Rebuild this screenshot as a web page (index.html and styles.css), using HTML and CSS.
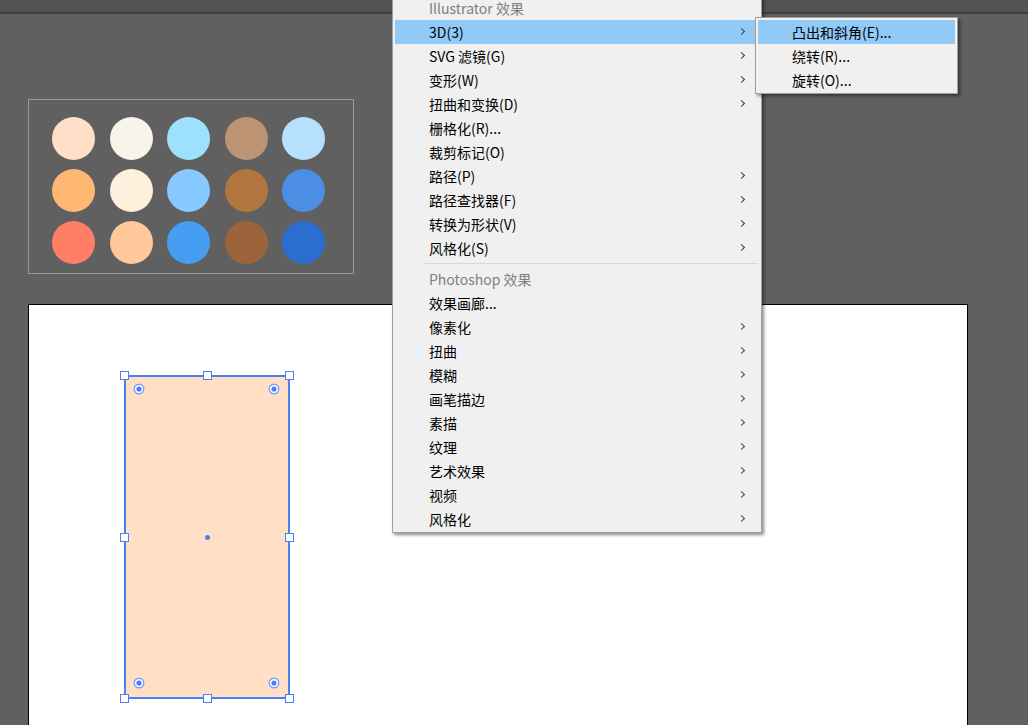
FILE: index.html
```html
<!DOCTYPE html>
<html lang="zh-CN">
<head>
    <meta charset="UTF-8">
    <title>Illustrator 效果菜单</title>
    <link rel="stylesheet" href="styles.css">
</head>
<body>
    <div class="topbar"></div>
    <div class="workspace">
        <div class="swatches">
            <span class="dot" style="background:#ffdfc7"></span>
            <span class="dot" style="background:#f8f4e9"></span>
            <span class="dot" style="background:#9ee1ff"></span>
            <span class="dot" style="background:#bc9373"></span>
            <span class="dot" style="background:#b7e0ff"></span>
            <span class="dot" style="background:#ffb874"></span>
            <span class="dot" style="background:#ffefdd"></span>
            <span class="dot" style="background:#86c8ff"></span>
            <span class="dot" style="background:#b3763f"></span>
            <span class="dot" style="background:#4c8ee3"></span>
            <span class="dot" style="background:#ff7e66"></span>
            <span class="dot" style="background:#ffc99c"></span>
            <span class="dot" style="background:#469df2"></span>
            <span class="dot" style="background:#9d643b"></span>
            <span class="dot" style="background:#2c6ecf"></span>
        </div>

        <div class="artboard">
            <div class="shape">
                <span class="handle h-tl"></span>
                <span class="handle h-tc"></span>
                <span class="handle h-tr"></span>
                <span class="handle h-ml"></span>
                <span class="handle h-mr"></span>
                <span class="handle h-bl"></span>
                <span class="handle h-bc"></span>
                <span class="handle h-br"></span>
                <span class="center-dot"></span>
                <svg class="corner c-tl" width="12" height="12" viewBox="0 0 12 12"><circle cx="6" cy="6" r="4.8" fill="#fff" stroke="#7e9dfb" stroke-width="1.4"/><circle cx="6" cy="6" r="2.6" fill="#4d7ef7"/></svg>
                <svg class="corner c-tr" width="12" height="12" viewBox="0 0 12 12"><circle cx="6" cy="6" r="4.8" fill="#fff" stroke="#7e9dfb" stroke-width="1.4"/><circle cx="6" cy="6" r="2.6" fill="#4d7ef7"/></svg>
                <svg class="corner c-bl" width="12" height="12" viewBox="0 0 12 12"><circle cx="6" cy="6" r="4.8" fill="#fff" stroke="#7e9dfb" stroke-width="1.4"/><circle cx="6" cy="6" r="2.6" fill="#4d7ef7"/></svg>
                <svg class="corner c-br" width="12" height="12" viewBox="0 0 12 12"><circle cx="6" cy="6" r="4.8" fill="#fff" stroke="#7e9dfb" stroke-width="1.4"/><circle cx="6" cy="6" r="2.6" fill="#4d7ef7"/></svg>
            </div>
        </div>
    </div>

    <div class="menu main-menu">
        <div class="menu-item label">Illustrator 效果</div>
        <div class="menu-item sub active">3D(3)</div>
        <div class="menu-item sub">SVG 滤镜(G)</div>
        <div class="menu-item sub">变形(W)</div>
        <div class="menu-item sub">扭曲和变换(D)</div>
        <div class="menu-item">栅格化(R)...</div>
        <div class="menu-item">裁剪标记(O)</div>
        <div class="menu-item sub">路径(P)</div>
        <div class="menu-item sub">路径查找器(F)</div>
        <div class="menu-item sub">转换为形状(V)</div>
        <div class="menu-item sub">风格化(S)</div>
        <div class="separator"></div>
        <div class="menu-item label">Photoshop 效果</div>
        <div class="menu-item">效果画廊...</div>
        <div class="menu-item sub">像素化</div>
        <div class="menu-item sub">扭曲</div>
        <div class="menu-item sub">模糊</div>
        <div class="menu-item sub">画笔描边</div>
        <div class="menu-item sub">素描</div>
        <div class="menu-item sub">纹理</div>
        <div class="menu-item sub">艺术效果</div>
        <div class="menu-item sub">视频</div>
        <div class="menu-item sub">风格化</div>
    </div>

    <div class="menu sub-menu">
        <div class="menu-item active">凸出和斜角(E)...</div>
        <div class="menu-item">绕转(R)...</div>
        <div class="menu-item">旋转(O)...</div>
    </div>
</body>
</html>
```

FILE: styles.css
```css
body {
    margin: 0;
    height: 725px;
    overflow: hidden;
    background-color: #606060;
    font-family: "Noto Sans CJK SC", "Microsoft YaHei", sans-serif;
    font-size: 14px;
    position: relative;
}
.topbar {
    height: 12px;
    background-color: #535353;
    border-bottom: 2px solid #3f3f3f;
}
.workspace {
    padding-left: 28px;
}
.swatches {
    margin-top: 85px;
    width: 301px;
    height: 156px;
    padding: 17px 0 0 23px;
    border: 1px solid #999999;
    display: grid;
    grid-template-columns: repeat(5, 43px);
    grid-auto-rows: 43px;
    column-gap: 14.6px;
    row-gap: 9px;
}
.dot {
    width: 43px;
    height: 43px;
    border-radius: 50%;
}
.artboard {
    margin-top: 30px;
    width: 938px;
    height: 440px;
    background-color: #ffffff;
    border: 1px solid #000000;
    position: relative;
}

/* selected rectangle on the artboard */
.shape {
    position: absolute;
    left: 95px;
    top: 70px;
    width: 162px;
    height: 320px;
    background-color: #ffe0c7;
    border: 2px solid #4d7ef7;
}
.handle {
    position: absolute;
    width: 7px;
    height: 7px;
    background-color: #ffffff;
    border: 1px solid #4d7ef7;
}
.h-tl, .h-ml, .h-bl { left: -6px; }
.h-tc, .h-bc { left: 77px; }
.h-tr, .h-mr, .h-br { right: -6px; }
.h-tl, .h-tc, .h-tr { top: -6px; }
.h-ml, .h-mr { top: 156px; }
.h-bl, .h-bc, .h-br { bottom: -6px; }
.center-dot {
    position: absolute;
    left: 79px;
    top: 158px;
    width: 5px;
    height: 5px;
    border-radius: 50%;
    background-color: #4d7ef7;
}
.corner {
    position: absolute;
}
.c-tl { left: 7px; top: 6px; }
.c-tr { right: 8px; top: 6px; }
.c-bl { left: 7px; bottom: 8px; }
.c-br { right: 8px; bottom: 8px; }

/* menus */
.menu {
    position: absolute;
    background-color: #f0f0f0;
    border: 1px solid #a0a0a0;
    box-shadow: 2px 2px 3px rgba(0, 0, 0, 0.45);
    padding: 2px;
}
.main-menu {
    left: 392px;
    top: -7px;
    width: 364px;
    padding-bottom: 1px;
}
.sub-menu {
    left: 755px;
    top: 17px;
    width: 197px;
    padding-bottom: 1px;
}
.menu-item {
    height: 24px;
    line-height: 24px;
    padding-left: 34px;
    color: #000000;
    white-space: nowrap;
    position: relative;
}
.menu-item.label {
    color: #808080;
}
.menu-item.active {
    background-color: #91c9f7;
}
.menu-item.sub::after {
    content: "";
    position: absolute;
    right: 15px;
    top: 9px;
    width: 4px;
    height: 4px;
    border-top: 1px solid #444444;
    border-right: 1px solid #444444;
    transform: rotate(45deg);
}
.separator {
    height: 1px;
    margin: 3px 1px 3px 30px;
    background-color: #d7d7d7;
}
```
